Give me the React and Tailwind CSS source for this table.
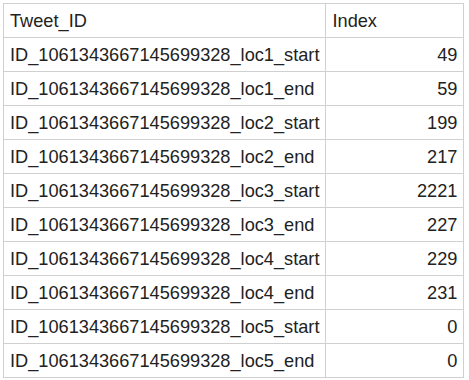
import React from 'react';

const rows = [
  ['ID_1061343667145699328_loc1_start', 49],
  ['ID_1061343667145699328_loc1_end', 59],
  ['ID_1061343667145699328_loc2_start', 199],
  ['ID_1061343667145699328_loc2_end', 217],
  ['ID_1061343667145699328_loc3_start', 2221],
  ['ID_1061343667145699328_loc3_end', 227],
  ['ID_1061343667145699328_loc4_start', 229],
  ['ID_1061343667145699328_loc4_end', 231],
  ['ID_1061343667145699328_loc5_start', 0],
  ['ID_1061343667145699328_loc5_end', 0],
];

const App = () => {
  return (
    <div className="bg-white w-[469px] h-[380px] overflow-hidden pt-[3px] pl-[3px] font-['Liberation_Sans',Arial,sans-serif] text-[#222]">
      <table className="border-collapse text-[18.2px] leading-none">
        <thead>
          <tr className="h-[34px]">
            <th className="w-[322px] border border-[#d0d0d0] px-[6px] pt-[2px] text-left font-normal">Tweet_ID</th>
            <th className="w-[138px] border border-[#d0d0d0] px-[6px] pt-[2px] text-left font-normal">Index</th>
          </tr>
        </thead>
        <tbody>
          {rows.map(([id, idx]) => (
            <tr key={id} className="h-[34px]">
              <td className="border border-[#d0d0d0] px-[6px] pt-[2px]">{id}</td>
              <td className="border border-[#d0d0d0] px-[6px] pt-[2px] text-right">{idx}</td>
            </tr>
          ))}
        </tbody>
      </table>
    </div>
  );
};

export default App;
